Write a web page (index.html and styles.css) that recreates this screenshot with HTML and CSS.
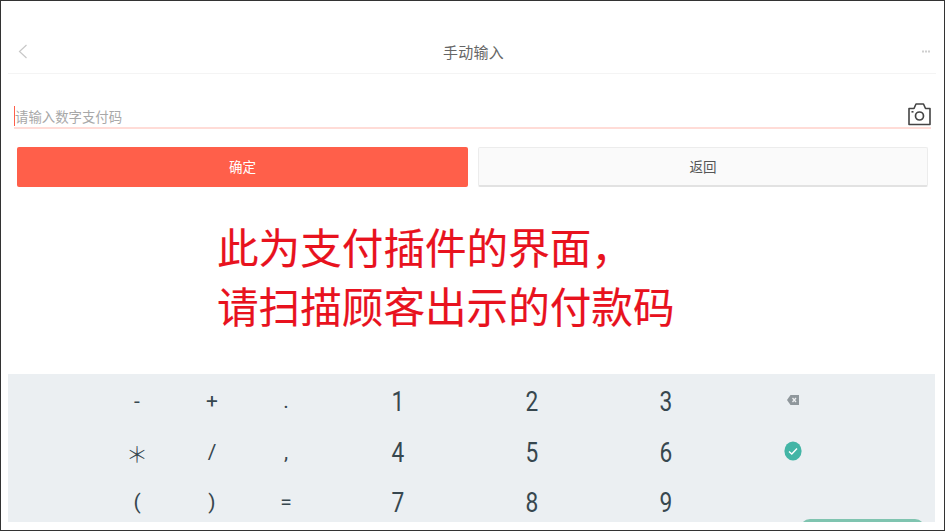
FILE: index.html
```html
<!DOCTYPE html>
<html lang="zh">
<head>
    <meta charset="utf-8">
    <title>手动输入</title>
    <link rel="stylesheet" href="styles.css">
</head>
<body>
    <div class="screen">
        <div class="header">
            <svg class="back" width="10" height="15" viewBox="0 0 10 15">
                <path d="M8.5 1 L1.5 7.5 L8.5 14" fill="none" stroke="#c8c8c8" stroke-width="1.2"/>
            </svg>
            <span class="title">手动输入</span>
            <svg class="more" width="8" height="3" viewBox="0 0 8 3">
                <path d="M0 0.5h2v2h-2z M3 0.5h2v2h-2z M6 0.5h2v2h-2z" fill="#cfcfcf"/>
            </svg>
        </div>

        <div class="input-row">
            <span class="placeholder">请输入数字支付码</span>
            <svg class="camera" width="23" height="24" viewBox="0 0 23 24">
                <path d="M1 6.5 H6 L8 2 H15.5 L17.5 6.5 H22 V22.5 H1 Z" fill="none" stroke="#444" stroke-width="1.6" stroke-linejoin="round"/>
                <circle cx="11.5" cy="14" r="4" fill="none" stroke="#444" stroke-width="1.7"/>
                <rect x="3.5" y="9" width="2" height="1.6" fill="#444"/>
            </svg>
        </div>

        <div class="buttons">
            <div class="button button-ok">确定</div>
            <div class="button button-back">返回</div>
        </div>

        <div class="notice">
            <div>此为支付插件的界面，</div>
            <div>请扫描顾客出示的付款码</div>
        </div>

        <div class="keyboard">
            <div class="keys">
                <span class="key sym">-</span>
                <span class="key sym">+</span>
                <span class="key sym">.</span>
                <span class="key num">1</span>
                <span class="key num">2</span>
                <span class="key num">3</span>
                <span class="key">
                    <svg width="12" height="10" viewBox="0 0 12 10">
                        <path d="M0 5 L3.5 0 H12 V10 H3.5 Z" fill="#8f979c"/>
                        <path d="M5.5 3 L9 7 M9 3 L5.5 7" stroke="#eef0f2" stroke-width="1.3"/>
                    </svg>
                </span>

                <span class="key star">＊</span>
                <span class="key sym">/</span>
                <span class="key sym">,</span>
                <span class="key num">4</span>
                <span class="key num">5</span>
                <span class="key num">6</span>
                <span class="key">
                    <svg width="18" height="20" viewBox="0 0 18 20">
                        <ellipse cx="9" cy="10" rx="8.6" ry="9.6" fill="#43b5a6"/>
                        <path d="M5 10.4 L7.8 13 L13 7.5" fill="none" stroke="#fff" stroke-width="1.4"/>
                    </svg>
                </span>

                <span class="key sym">(</span>
                <span class="key sym">)</span>
                <span class="key sym">=</span>
                <span class="key num">7</span>
                <span class="key num">8</span>
                <span class="key num">9</span>
                <span class="key"></span>
            </div>
            <div class="key-done"></div>
        </div>
    </div>
</body>
</html>
```

FILE: styles.css
```css
body {
    margin: 0;
    background-color: white;
    font-family: "Noto Sans CJK SC", "Noto Sans", sans-serif;
}
.screen {
    position: relative;
    box-sizing: border-box;
    width: 945px;
    height: 531px;
    border: 1px solid #333;
    overflow: hidden;
}
.header {
    display: flex;
    justify-content: space-between;
    align-items: center;
    box-sizing: border-box;
    height: 73px;
    margin: 0 8px 0 7px;
    padding: 29px 6px 0 10px;
    border-bottom: 1px solid #f4f4f4;
}
.title {
    margin-right: 3px;
    font-size: 15px;
    letter-spacing: .3px;
    color: #666;
}
.input-row {
    display: flex;
    justify-content: space-between;
    align-items: flex-end;
    box-sizing: border-box;
    height: 27px;
    width: 917px;
    margin: 28px 0 0 13px;
    border-bottom: 2px solid #ffdcd7;
}
.placeholder {
    border-left: 1px solid #ff5f4a;
    font-size: 13.4px;
    line-height: 20px;
    margin-bottom: 1px;
    color: #a8a8a8;
}
.camera {
    display: block;
    margin-bottom: 1px;
}
.buttons {
    display: flex;
    gap: 10px;
    margin: 18px 0 0 16px;
}
.button {
    box-sizing: border-box;
    width: 451px;
    height: 40px;
    line-height: 38px;
    text-align: center;
    font-size: 13.5px;
    border-radius: 2px;
}
.button-ok {
    background-color: #ff5f4a;
    color: white;
}
.button-back {
    width: 450px;
    line-height: 36px;
    background-color: #fafafa;
    border: 1px solid #ececec;
    border-bottom: 2px solid #e2e2e2;
    color: #555;
}
.notice {
    margin: 30px 0 0 216px;
    font-size: 41.6px;
    line-height: 59px;
    color: #e8121e;
    -webkit-text-stroke: .15px #e8121e;
}
.keyboard {
    position: relative;
    box-sizing: border-box;
    height: 148px;
    width: 927px;
    margin: 39px 0 0 7px;
    padding-top: 3px;
    background-color: #ebeff2;
    overflow: hidden;
}
.keys {
    display: grid;
    grid-template-columns: 83px 92px 58px 90px 134px 134px 134px 120px;
    grid-auto-rows: 50.5px;
    font-family: Roboto, sans-serif;
    color: #37474f;
}
.keys .key:nth-child(7n+1) {
    grid-column-start: 2;
}
.key {
    display: flex;
    justify-content: center;
    align-items: center;
}
.key svg {
    margin-bottom: 4px;
}
.num {
    font-size: 27px;
    transform: scaleX(.84);
}
.sym {
    padding-bottom: 2px;
    font-size: 21px;
}
.star {
    padding-bottom: 2px;
    font-family: "Noto Sans CJK SC", sans-serif;
    font-size: 22px;
    font-weight: 300;
}
.key-done {
    position: absolute;
    left: 792px;
    top: 145px;
    width: 125px;
    height: 40px;
    border-radius: 10px;
    background-color: #7fc4b0;
}
```
